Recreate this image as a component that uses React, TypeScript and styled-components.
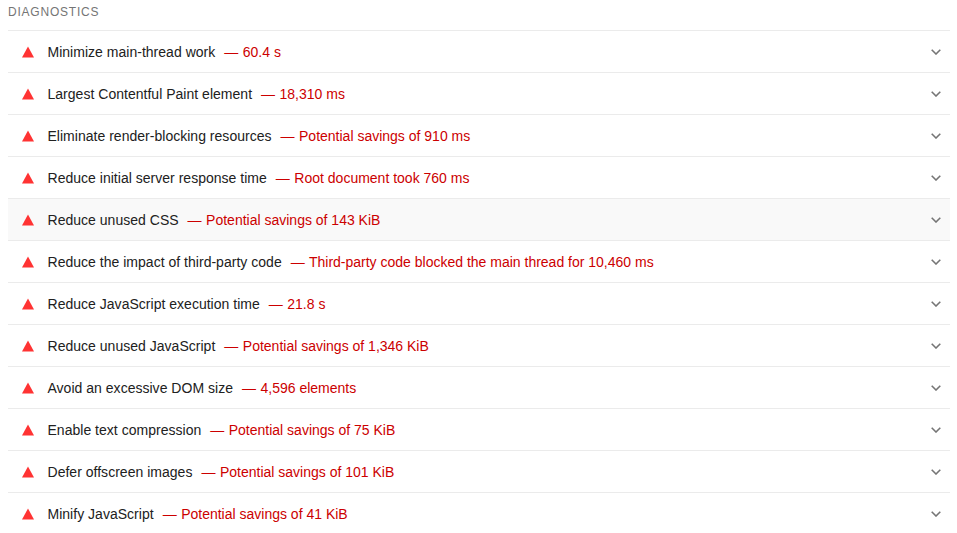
import { createGlobalStyle, styled } from "styled-components";

const GlobalStyle = createGlobalStyle`
  html, body {
    margin: 0;
    background: #fff;
  }
  body {
    font-family: "Liberation Sans", Arial, sans-serif;
  }
`;

const Page = styled.div`
  width: 957px;
  height: 533px;
  overflow: hidden;
  padding: 0 7px 0 8px;
  box-sizing: border-box;
`;

const Heading = styled.div`
  height: 30px;
  padding-top: 6px;
  box-sizing: border-box;
  font-size: 12px;
  line-height: 12px;
  letter-spacing: 0.78px;
  color: #757575;
  text-transform: uppercase;
`;

const Row = styled.div<{ $hover?: boolean }>`
  display: flex;
  align-items: center;
  height: 42px;
  box-sizing: border-box;
  border-top: 1px solid #ebebeb;
  padding: 0 9px 0 14px;
  background: ${(p) => (p.$hover ? "#f9f9f9" : "transparent")};
`;

const Triangle = styled.svg`
  width: 12px;
  height: 12px;
  flex: none;
  margin-right: 13.5px;
`;

const Title = styled.span`
  font-size: 14px;
  color: #212121;
  letter-spacing: 0.02px;
  white-space: nowrap;
`;

const Value = styled.span`
  font-size: 14px;
  color: #c00;
  margin-left: 9px;
  white-space: nowrap;
`;

const Dash = styled.span`
  margin-right: 0.6px;
`;

const Chevron = styled.svg`
  width: 10px;
  height: 6px;
  flex: none;
  margin-left: auto;
`;

const audits: [string, string][] = [
  ["Minimize main-thread work", "60.4 s"],
  ["Largest Contentful Paint element", "18,310 ms"],
  ["Eliminate render-blocking resources", "Potential savings of 910 ms"],
  ["Reduce initial server response time", "Root document took 760 ms"],
  ["Reduce unused CSS", "Potential savings of 143 KiB"],
  ["Reduce the impact of third-party code", "Third-party code blocked the main thread for 10,460 ms"],
  ["Reduce JavaScript execution time", "21.8 s"],
  ["Reduce unused JavaScript", "Potential savings of 1,346 KiB"],
  ["Avoid an excessive DOM size", "4,596 elements"],
  ["Enable text compression", "Potential savings of 75 KiB"],
  ["Defer offscreen images", "Potential savings of 101 KiB"],
  ["Minify JavaScript", "Potential savings of 41 KiB"],
];

const App = () => {
  return (
    <Page>
      <GlobalStyle />
      <Heading>Diagnostics</Heading>
      {audits.map(([title, value], i) => (
        <Row key={title} $hover={i === 4}>
          <Triangle viewBox="0 0 12 12">
            <path d="M6 0.5 L12 11.5 L0 11.5 Z" fill="#ff3333" />
          </Triangle>
          <Title>{title}</Title>
          <Value>
            <Dash>—</Dash> {value}
          </Value>
          <Chevron viewBox="0 0 10 6">
            <path d="M0.7 0.8 L5 5 L9.3 0.8" fill="none" stroke="#757575" strokeWidth="1.6" />
          </Chevron>
        </Row>
      ))}
    </Page>
  );
};

export default App;
